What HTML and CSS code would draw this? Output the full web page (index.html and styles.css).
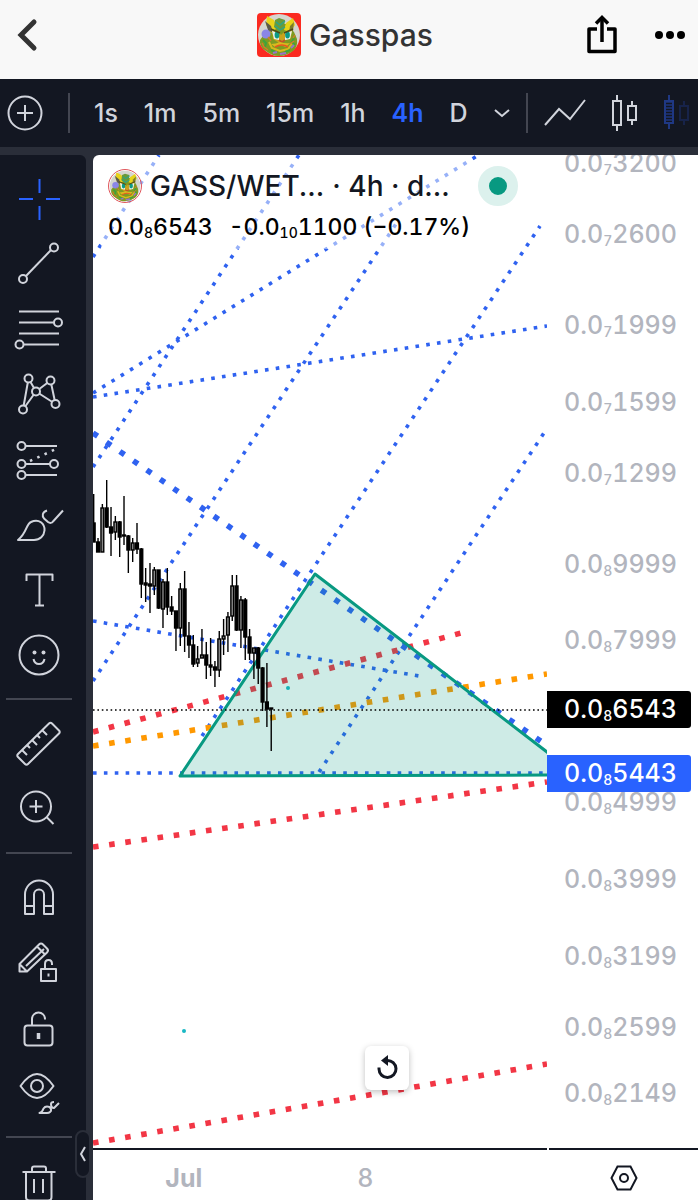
FILE: index.html
```html
<!DOCTYPE html>
<html lang="en">

<head>
  <meta charset="UTF-8" />
  <meta name="viewport" content="width=device-width, initial-scale=1.0" />
  <title>Gasspas</title>
  <link rel="stylesheet" href="styles.css">
</head>

<body>
  <!-- token picture, shared by the header and the chart legend -->
  <svg class="defs" width="0" height="0" aria-hidden="true">
    <symbol id="avatar" viewBox="0 0 44 44">
      <circle cx="22" cy="22" r="21" fill="#d5d6cf" />
      <path d="M3 27q-1 7 6 11 6 5 13 5t14-5q5-4 4-12l-3-7-8-8h-12l-8 8z" fill="#7d9b22" />
      <path d="M10 3l7 4 3 8-6 5-5-8z" fill="#e9d21b" />
      <path d="M8 8l3 9 5 3-2-7z" fill="#5c5a4a" />
      <path d="M36 5l-7 5-2 7 6 2 5-7z" fill="#e6d319" />
      <path d="M37 9l-1 9-4 2 1-7z" fill="#7a7d2a" />
      <path d="M18 7l4-2 6 2-1 8-5 4-5-5z" fill="#6a9a3a" />
      <path d="M19 9l4 3 5-4M18 13l5 4 5-3" fill="none" stroke="#2aa58a" stroke-width="1.4" />
      <circle cx="9" cy="21" r="4.5" fill="#8a86e8" />
      <path d="M15 16l7 3 2 3 3-3 8-3-1 9-7 3-5 2-6-4z" fill="#c9a21c" />
      <path d="M15 18l7 2v7l-5-1z" fill="#e9f3ec" />
      <path d="M35 18l-7 2v7l5-1z" fill="#e9f3ec" />
      <ellipse cx="20" cy="22" rx="2.4" ry="3.4" fill="#0b9a86" />
      <ellipse cx="30.500" cy="22" rx="2.4" ry="3.4" fill="#0b9a86" />
      <path d="M14 16l9 4M36 16l-9 4" stroke="#4a4a1a" stroke-width="1.4" />
      <path d="M22 27l3 2 3-2" fill="none" stroke="#c2512a" stroke-width="1.6" />
      <path d="M12 29l3 6 8 3 8-2 5-7" fill="none" stroke="#d9b81d" stroke-width="2" />
      <path d="M14 31q5 0 9-2 6 2 10 1l-4 4-6-2-5 2z" fill="#d9b81f" />
      <path d="M18 34q7-4 13 0" fill="none" stroke="#e8571f" stroke-width="1.6" />
      <path d="M6 27l3 3-1 4M37 25l-2 4 3 3M14 37l4 2M28 39l5-2" stroke="#3fa33c" stroke-width="2" fill="none" />
      <path d="M16 40l4-1M23 41l6-1M34 35l3-3" stroke="#9675c9" stroke-width="2" />
      <path d="M5 30l2 4 4 3M38 22l-2 3M11 24l3 4M37 28l-4 3" stroke="#d9792a" stroke-width="1.3" fill="none" />
    </symbol>
  </svg>

  <header class="header">
    <button class="back" aria-label="Back">
      <svg width="40" height="44" viewBox="0 0 40 44">
        <path d="M30 9L17 22l13 13" />
      </svg>
    </button>
    <div class="token">
      <svg class="token-img" width="44" height="44"><use href="#avatar" /></svg>
      <h1>Gasspas</h1>
    </div>
    <div class="actions">
      <button aria-label="Share">
        <svg width="32" height="44" viewBox="0 0 32 44">
          <path d="M11 16H3v22.500h26V16h-8" stroke-width="3.500" stroke-linejoin="round" />
          <path d="M16 29V5" stroke-width="3.500" />
          <path d="M10 10.500l6-6 6 6" stroke-width="3.500" />
        </svg>
      </button>
      <button aria-label="More">
        <svg width="32" height="44" viewBox="0 0 32 44">
          <g class="solid">
            <circle cx="5" cy="22" r="4" />
            <circle cx="16" cy="22" r="4" />
            <circle cx="27" cy="22" r="4" />
          </g>
        </svg>
      </button>
    </div>
  </header>

  <nav class="toolbar">
    <button class="icon-btn" aria-label="Compare">
      <svg width="36" height="36" viewBox="0 0 36 36">
        <circle cx="18" cy="18" r="16.500" />
        <path d="M10 18h16M18 10v16" />
      </svg>
    </button>
    <span class="divider"></span>
    <div class="intervals">
      <button>1s</button>
      <button>1m</button>
      <button>5m</button>
      <button>15m</button>
      <button>1h</button>
      <button class="active">4h</button>
      <button>D</button>
      <button aria-label="More intervals">
        <svg width="16" height="36" viewBox="2 0 16 36">
          <path d="M3 15l7 6 7-6" />
        </svg>
      </button>
    </div>
    <span class="divider"></span>
    <div class="chart-types">
      <button aria-label="Line">
        <svg width="42" height="40" viewBox="0 0 42 40">
          <path d="M1 32l14-16 11 10L41 7" />
        </svg>
      </button>
      <button aria-label="Candles">
        <svg width="28" height="40" viewBox="0 0 28 40">
          <path d="M3 8h8v24H3zM7 2v6M7 32v6M18 13h8v14h-8zM22 8v5M22 27v5" />
        </svg>
      </button>
      <button class="faded" aria-label="Hollow candles">
        <svg width="28" height="40" viewBox="0 0 28 40">
          <path d="M3 8h8v22H3zM7 2v6M7 30v6" />
          <path d="M7 8v22" stroke-width="7" stroke-dasharray="2 1" opacity=".7" />
          <path d="M18 13h8v14h-8zM22 8v5M22 27v5" opacity=".4" />
        </svg>
      </button>
    </div>
  </nav>

  <main class="workspace">
    <aside class="tools">
      <div class="tool-group">
        <button class="active" aria-label="Cross">
          <svg viewBox="-28 -28 56 56"><path d="M-20-1h14M7-1h14M.5-21v14M.5 6v14" /></svg>
        </button>
        <button aria-label="Trend line">
          <svg viewBox="-28 -28 56 56">
            <path d="M12-15L-13 11" />
            <circle cx="15" cy="-17.500" r="4" />
            <circle cx="-16" cy="14" r="4" />
          </svg>
        </button>
        <button aria-label="Fib retracement">
          <svg viewBox="-28 -28 56 56">
            <path d="M-20-18.500h40M-20-7.500h35M-20 3.500h40M-15 14.500h35" />
            <circle cx="19" cy="-7.500" r="4" />
            <circle cx="-19.500" cy="14.500" r="4" />
          </svg>
        </button>
        <button aria-label="Patterns">
          <svg viewBox="-28 -28 56 56">
            <path d="M-10.500-16.500L-16 14.500-3-3.500zM11.500-14.500L-3-3.500 16.500 9z" />
            <g class="knob">
              <circle cx="-10.500" cy="-16.500" r="4" />
              <circle cx="11.500" cy="-14.500" r="4" />
              <circle cx="-3" cy="-3.500" r="4" />
              <circle cx="16.500" cy="9" r="4" />
              <circle cx="-16" cy="14.500" r="4" />
            </g>
          </svg>
        </button>
        <button aria-label="Forecasting">
          <svg viewBox="-28 -28 56 56">
            <path d="M-13-14h31M-13 4h24M-13 15h31" />
            <path d="M-9 1L17-11" stroke-dasharray="2.500 5.500" stroke-width="2.500" />
            <circle cx="-17.500" cy="-14" r="4" />
            <circle cx="-17.500" cy="4" r="4" />
            <circle cx="-17.500" cy="15" r="4" />
            <circle cx="15" cy="4" r="4" />
          </svg>
        </button>
        <button aria-label="Brush">
          <svg viewBox="-28 -28 56 56">
            <path d="M-21 15C-12 8-13-1-8-3 0-7 6-1 5.500 5.500 5 11 1 15-5 15z" />
            <path d="M8-14.500C3-13 3-9 5-6.500L9-3c2 1.500 4 1 5-.5L24-14.500" />
          </svg>
        </button>
        <button aria-label="Text">
          <svg viewBox="-28 -28 56 56"><path d="M-12.500-9v-6.500h26V-9M.5-15.500v31M-4 15.500h9" /></svg>
        </button>
        <button aria-label="Emoji">
          <svg viewBox="-28 -28 56 56">
            <circle cx="0" cy="0" r="19.500" />
            <path d="M-5.500 4q1 5 5.500 5t5.500-5" />
            <g class="solid">
              <circle cx="-4.500" cy="-2.500" r="2" />
              <circle cx="4.500" cy="-2.500" r="2" />
            </g>
          </svg>
        </button>
      </div>
      <div class="tool-group">
        <button aria-label="Measure">
          <svg viewBox="-28 -28 56 56">
            <path d="M10-20.500q1.500-1.500 3 0l7 7q1.500 1.500 0 3L-11 20q-1.500 1.500-3 0l-7-7q-1.500-1.500 0-3z" />
            <path d="M-17 6l5 5M-12 1l3 3M-7-4l5 5M-2-9l3 3M3-14l5 5" />
          </svg>
        </button>
        <button aria-label="Zoom in">
          <svg viewBox="-28 -28 56 56">
            <circle cx="-3" cy="-2.500" r="15" />
            <path d="M-9.500-2.500h13M-3-9V4M7.500 8l7 7" />
          </svg>
        </button>
      </div>
      <div class="tool-group">
        <button aria-label="Magnet">
          <svg viewBox="-28 -28 56 56">
            <path d="M-14 16V-3.500a14 14 0 0 1 28 0V16H5V-3.500a5 5 0 0 0-10 0V16zM-14 8h9M5 8h9" />
          </svg>
        </button>
        <button aria-label="Lock drawing mode">
          <svg viewBox="-28 -28 56 56">
            <path d="M-19.500 8.500V1L0-18.500q2-2 4 0l4 4q2 2 0 4L-12 8.500zM-19.500 1l7.500 7.500M-13 3L5-14M-2-16.500l8 8" />
            <path d="M2 6h15v12H2zM6 6V1q0-4 3.500-4T13 1v1" />
            <path d="M9.500 10.500v3" />
          </svg>
        </button>
        <button aria-label="Lock all drawings">
          <svg viewBox="-28 -28 56 56">
            <rect x="-14.500" y="-2.500" width="28" height="20" rx="3" />
            <path d="M-7-2.500V-9a6.500 6.500 0 0 1 13 0v.5" />
            <path d="M-.5 5v6" stroke-width="3.500" />
          </svg>
        </button>
        <button aria-label="Hide drawings">
          <svg viewBox="-28 -28 56 56">
            <path d="M-18.500-7Q-10-19-2-19T14.500-7Q6 5-2 5T-18.500-7z" />
            <circle cx="-2" cy="-7" r="6" />
            <path d="M.5 20q3-1 4-4.500 2-3 6-1.500 3 3 .5 5-1 1-3 1zM12 11q0 4 3 4l5-5M15 9q-3 0-3 2" />
          </svg>
        </button>
      </div>
      <div class="tool-group">
        <button aria-label="Remove objects">
          <svg viewBox="-28 -28 56 56">
            <path d="M-16.500-10h33M-7-10v-3.500q0-2 2-2H5q2 0 2 2v3.500M-13-10v25q0 3.500 3.500 3.500H9q3.500 0 3.500-3.500v-25M-5-3v14M4-3v14" />
          </svg>
        </button>
      </div>
      <button class="collapse" aria-label="Hide drawings toolbar">
        <svg width="8" height="18" viewBox="0 0 8 18"><path d="M6 2L2 9l4 7" /></svg>
      </button>
    </aside>

    <section class="chart">
      <div class="plot">
        <svg class="canvas" viewBox="0 0 454 993" preserveAspectRatio="xMaxYMin slice">
          <g class="trend">
            <path d="M0 102L66 0" />
            <path d="M0 312L206 0" />
            <path d="M0 238L384 1" />
            <path d="M0 242L454 171" />
            <path d="M0 526L303 69" />
            <path d="M109 581L447 71" />
            <path d="M226 617L451 278" />
            <path d="M0 466l326 55" />
            <path d="M0 618h454" />
          </g>
          <path class="trend thick" d="M0 278l449 309" />
          <path class="trend thick red" d="M0 577l368-99" />
          <path class="trend thick red" d="M0 692l454-65" />
          <path class="trend thick red" d="M0 988l454-79" />
          <path class="trend thick orange" d="M0 591l454-72" />
          <circle class="spark" cx="195" cy="533" r="2" />
          <circle class="spark" cx="91" cy="876" r="2" />
          <path class="triangle" d="M222 419L87 621l397-1z" />
          <path class="last-price" d="M0 555h454" />
          <g id="candles"></g>
        </svg>

        <div class="legend">
          <div class="legend-title">
            <svg class="legend-img" width="34" height="34"><use href="#avatar" /></svg>
            <span>GASS/WET...</span>
            <span>· 4h · d...</span>
            <span class="status"></span>
          </div>
          <div class="legend-values">
            <span>0.0<sub>8</sub>6543</span>
            <span>-0.0<sub>10</sub>1100 (−0.17%)</span>
          </div>
        </div>

        <button class="reset" aria-label="Reset chart view">
          <svg width="24" height="26" viewBox="0 0 24 26">
            <path d="M4 12.500v1.500a8.500 8.500 0 1 0 8-8.500" />
            <path class="solid" d="M13 0v11L6 5.500z" />
          </svg>
        </button>
      </div>

      <div class="price-axis">
        <ol class="scale">
          <li>0.0<sub>7</sub>3200</li>
          <li>0.0<sub>7</sub>2600</li>
          <li>0.0<sub>7</sub>1999</li>
          <li>0.0<sub>7</sub>1599</li>
          <li>0.0<sub>7</sub>1299</li>
          <li>0.0<sub>8</sub>9999</li>
          <li>0.0<sub>8</sub>7999</li>
          <li>0.0<sub>8</sub>4999</li>
          <li>0.0<sub>8</sub>3999</li>
          <li>0.0<sub>8</sub>3199</li>
          <li>0.0<sub>8</sub>2599</li>
          <li>0.0<sub>8</sub>2149</li>
        </ol>
        <span class="tag last">0.0<sub>8</sub>6543</span>
        <span class="tag level">0.0<sub>8</sub>5443</span>
      </div>

      <div class="time-axis">
        <span class="month">Jul</span>
        <span>8</span>
      </div>

      <div class="axis-corner">
        <button aria-label="Chart settings">
          <svg width="28" height="28" viewBox="0 0 28 28">
            <path d="M7.500 2.500h13L26.500 14l-6 11.500h-13L1.500 14z" />
            <circle cx="14" cy="14" r="4" />
          </svg>
        </button>
      </div>
    </section>
  </main>

  <script src="chart.js"></script>
</body>

</html>
```

FILE: styles.css
```css
* {
  box-sizing: border-box;
}

body {
  margin: 0;
  height: 100vh;
  display: flex;
  flex-direction: column;
  overflow: hidden;
  background: #2a2e39;
  color: #131722;
  font-family: Inter, 'Liberation Sans', sans-serif;
  font-weight: 500;
}

button {
  display: flex;
  align-items: center;
  justify-content: center;
  padding: 0;
  border: none;
  background: none;
  color: inherit;
  font: inherit;
  cursor: pointer;
}

sub {
  font-size: 14px;
  line-height: 1;
  vertical-align: -3px;
}

svg {
  display: block;
  flex: none;
  fill: none;
  stroke: currentColor;
  stroke-width: 2;
}

symbol {
  stroke: none;
}

.defs {
  position: absolute;
}

.solid {
  fill: currentColor;
  stroke: none;
}

/* header */
.header {
  display: grid;
  grid-template-columns: 1fr auto 1fr;
  align-items: center;
  height: 79px;
  padding: 0 12px 10px 4px;
  background: #f8f8f8;
  flex: none;
}

.back {
  justify-self: start;
  color: #333;
}

.back svg {
  stroke-width: 5;
  stroke-linecap: round;
}

.token {
  display: flex;
  align-items: center;
  gap: 8px;
}

.token-img {
  background: #fb2a20;
  border-radius: 4px;
  stroke: none;
}

.token h1 {
  margin: 0;
  font-size: 30px;
  font-weight: 500;
  color: #333;
}

.actions {
  display: flex;
  justify-content: flex-end;
  gap: 36px;
  color: #000;
}

/* interval toolbar */
.toolbar {
  display: flex;
  align-items: center;
  height: 68px;
  padding-left: 7px;
  margin-bottom: 8px;
  background: #131722;
  color: #d1d4dc;
  font-size: 25px;
  overflow: hidden;
  flex: none;
}

.divider {
  width: 2px;
  height: 40px;
  background: #434651;
  flex: none;
}

.icon-btn {
  margin-right: 25px;
}

.intervals {
  display: flex;
  align-items: center;
  gap: 26px;
  margin: 0 16px 0 24px;
}

.chart-types {
  display: flex;
  align-items: center;
  gap: 24px;
  margin-left: 16px;
}

.intervals .active {
  color: #2962ff;
  font-weight: 600;
}

.faded {
  color: #2546ae;
  opacity: .7;
}

/* workspace */
.workspace {
  flex: 1;
  min-height: 0;
  display: flex;
  gap: 7px;
}

.tools {
  position: relative;
  width: 86px;
  padding-top: 12px;
  background: #131722;
  border-radius: 0 6px 0 0;
  color: #d1d4dc;
  flex: none;
}

.tool-group + .tool-group::before {
  content: '';
  display: block;
  width: 66px;
  height: 2px;
  margin: 11px 6px;
  background: #434651;
}

.tool-group button {
  width: 78px;
  height: 65px;
}

.tool-group svg {
  width: 56px;
  height: 56px;
  stroke-linejoin: round;
}

.tool-group .active {
  color: #2962ff;
}

.knob {
  fill: #131722;
}

.collapse {
  position: absolute;
  right: -5px;
  bottom: 22px;
  width: 16px;
  height: 48px;
  background: #131722;
  border: 2px solid #2a2e39;
  border-radius: 8px;
}

/* chart */
.chart {
  flex: 1;
  min-width: 0;
  display: grid;
  grid-template-columns: 1fr 151px;
  grid-template-rows: 1fr 52px;
  background: #fff;
  border-radius: 6px 0 0 0;
  overflow: hidden;
}

.plot {
  position: relative;
  min-height: 0;
}

.canvas {
  width: 100%;
  height: 100%;
}

.trend {
  stroke: #2f62f0;
  stroke-width: 3.6;
  stroke-dasharray: 3.6 7.28;
}

.thick {
  stroke-width: 5.6;
  stroke-dasharray: 5.6 10.7;
}

.red {
  stroke: #f23645;
}

.orange {
  stroke: #ff9800;
}

.spark {
  fill: #19b8c4;
  stroke: none;
}

.triangle {
  fill: rgba(8, 153, 129, .2);
  stroke: #089981;
  stroke-width: 3;
  stroke-linejoin: round;
}

.last-price {
  stroke: #000;
  stroke-width: 1.6;
  stroke-dasharray: 1.6 2.8;
}

#candles {
  stroke: #000;
  stroke-width: 1.4;
}

.legend {
  position: absolute;
  top: 5px;
  left: 8px;
  padding: 5px 6px 2px 7px;
  background: rgba(255, 255, 255, .5);
}

.legend-title {
  display: flex;
  align-items: center;
  gap: 8px;
  height: 42px;
  font-size: 28px;
  white-space: nowrap;
}

.legend-img {
  border: 1px solid #e0565b;
  border-radius: 50%;
  stroke: none;
}

.status {
  width: 40px;
  height: 40px;
  margin-left: 20px;
  border: 11px solid #dcf1ed;
  border-radius: 50%;
  background: #089981;
}

.legend-values {
  display: flex;
  gap: 16px;
  line-height: 40px;
  font-size: 23px;
  font-variant-numeric: tabular-nums;
  color: #000;
  white-space: nowrap;
}

.reset {
  position: absolute;
  left: 60%;
  bottom: 58px;
  width: 44px;
  height: 44px;
  background: #fff;
  border-radius: 6px;
  box-shadow: 0 2px 6px rgba(0, 0, 0, .25);
}

.reset svg {
  stroke-width: 3;
}

/* price axis: log scale, so the rows are uneven */
.price-axis {
  position: relative;
  min-height: 0;
  overflow: hidden;
  font-size: 25px;
  font-variant-numeric: tabular-nums;
  line-height: 32px;
  color: #b2b5be;
}

.scale {
  display: grid;
  grid-template-rows: 71fr 91fr 77fr 71fr 91fr 76fr 162fr 77fr 77fr 71fr 66fr 71fr;
  height: calc(100% + 8px);
  margin: -8px 0 0;
  padding: 0 0 0 17px;
  list-style: none;
}

.scale li {
  min-height: 0;
}

.tag {
  position: absolute;
  left: 0;
  right: 7px;
  padding-left: 17px;
  line-height: 37px;
  color: #fff;
  border-radius: 0 3px 3px 0;
}

.last {
  top: 54%;
  background: #000;
}

.level {
  top: 60.4%;
  background: #2962ff;
}

/* time axis */
.time-axis {
  display: flex;
  align-items: center;
  padding-top: 6px;
  border-top: 2px solid #131722;
  font-size: 25px;
  color: #b2b5be;
}

.time-axis span {
  width: 40%;
  text-align: center;
}

.time-axis .month {
  font-weight: 700;
}

.axis-corner {
  display: flex;
  align-items: center;
  justify-content: center;
  margin-left: 2px;
  padding-top: 6px;
  border-top: 2px solid #131722;
}
```

FILE: chart.js
```js
// high, body top, body bottom, low, hollow
const candles = [
  [339, 368, 387, 387], [383, 387, 397, 397], [349, 353, 397, 397, 1], [325, 353, 372, 373],
  [352, 372, 378, 401], [361, 367, 377, 385, 1], [366, 367, 382, 402], [341, 380, 381, 390],
  [380, 381, 395, 418], [383, 388, 395, 407, 1], [368, 388, 394, 399], [393, 394, 429, 443],
  [413, 428, 430, 447], [408, 429, 431, 458], [412, 415, 431, 440, 1], [415, 415, 453, 454],
  [424, 427, 454, 473, 1], [413, 427, 452, 460], [441, 452, 456, 460], [456, 456, 473, 496],
  [428, 434, 473, 491, 1], [416, 434, 481, 497], [467, 481, 490, 503], [480, 490, 509, 512],
  [491, 504, 508, 512, 1], [474, 500, 503, 503, 1], [487, 500, 510, 524], [483, 510, 512, 521],
  [506, 512, 515, 532], [476, 484, 515, 522, 1], [464, 481, 484, 500, 1], [457, 462, 480, 497, 1],
  [420, 431, 461, 466, 1], [420, 431, 475, 476], [441, 445, 475, 493, 1], [443, 445, 482, 505],
  [474, 482, 498, 505], [493, 493, 498, 524, 1], [492, 493, 513, 529], [512, 513, 547, 556],
  [508, 547, 554, 572], [553, 553, 554, 596]
];

const step = 4.33;

document.getElementById("candles").innerHTML = candles.map(([high, top, bottom, low, hollow], i) => {
  const x = 0.7 + i * step;
  return `
    <path d="M${x} ${high}V${low}" />
    <rect x="${x - 1.4}" y="${top}" width="2.8" height="${bottom - top}" fill="${hollow ? "#888" : "#000"}" />
  `;
}).join("");
```
